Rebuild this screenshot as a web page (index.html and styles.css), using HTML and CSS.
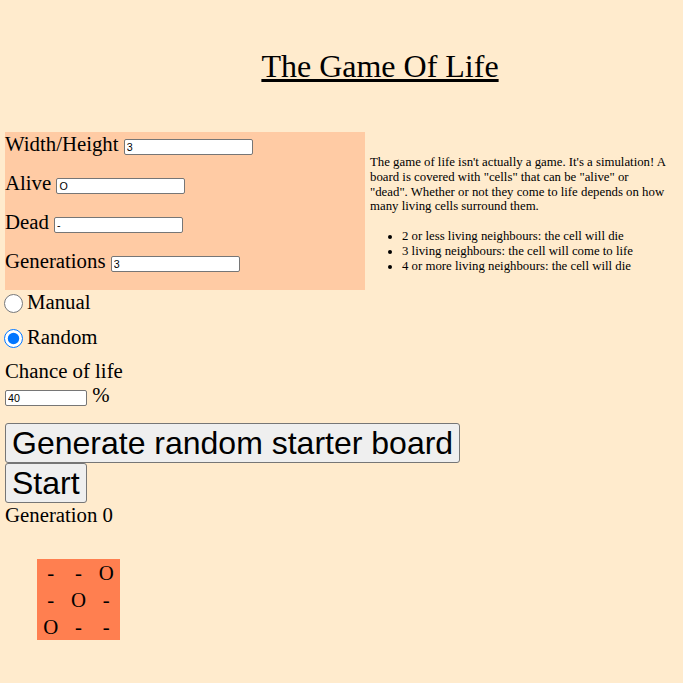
FILE: index.html
```html
<!DOCTYPE html>
<html lang="en">
<head>
<meta charset="utf-8">
<title>The Game Of Life</title>
<link rel="stylesheet" href="styles.css">
</head>
<body>
<header class="header">
  <h1 class="title">The Game Of Life</h1>
</header>

<section class="top">
  <div class="settings">
    <div class="field">Width/Height <input class="text-input" type="text" value="3"></div>
    <div class="field">Alive <input class="text-input" type="text" value="O"></div>
    <div class="field">Dead <input class="text-input" type="text" value="-"></div>
    <div class="field">Generations <input class="text-input" type="text" value="3"></div>
  </div>
  <div class="intro">
    <p class="intro-text">The game of life isn't actually a game. It's a simulation! A board is covered with "cells" that can be "alive" or "dead". Whether or not they come to life depends on how many living cells surround them.</p>
    <ul class="rules">
      <li>2 or less living neighbours: the cell will die</li>
      <li>3 living neighbours: the cell will come to life</li>
      <li>4 or more living neighbours: the cell will die</li>
    </ul>
  </div>
</section>

<div class="mode">
  <label class="radio-row"><input class="radio" type="radio" name="mode">Manual</label>
  <label class="radio-row"><input class="radio" type="radio" name="mode" checked>Random</label>
</div>

<div class="chance">
  <div class="chance-label">Chance of life</div>
  <div class="chance-input"><input class="text-input small" type="text" value="40"> %</div>
</div>

<div class="actions">
  <button class="btn" type="button">Generate random starter board</button>
  <button class="btn" type="button">Start</button>
</div>

<div class="generation">Generation 0</div>

<div class="board">
  <span class="cell">-</span><span class="cell">-</span><span class="cell">O</span>
  <span class="cell">-</span><span class="cell">O</span><span class="cell">-</span>
  <span class="cell">O</span><span class="cell">-</span><span class="cell">-</span>
</div>
</body>
</html>
```

FILE: styles.css
```css
html, body {
  margin: 0;
  padding: 0;
}

body {
  background: #ffebcd;
  font-family: "Liberation Serif", "Times New Roman", serif;
  color: #000;
  padding: 0 5px 20px 5px;
}

.header {
  padding-top: 48px;
  padding-left: 77px;
  text-align: center;
}

.title {
  margin: 0;
  font-size: 32px;
  line-height: 37px;
  font-weight: normal;
  text-decoration: underline;
}

.top {
  display: flex;
  align-items: center;
  margin-top: 47px;
}

.settings {
  width: 360px;
  flex: none;
  background: #ffcba4;
  padding: 0 0 17px 0;
  box-sizing: border-box;
}

.field {
  font-size: 20.8px;
  line-height: 24px;
  margin-bottom: 15px;
}

.field:last-child {
  margin-bottom: 0;
}

.text-input {
  box-sizing: border-box;
  width: 129px;
  height: 16px;
  padding: 1px 2px;
  border: 1px solid #767676;
  border-radius: 2px;
  background: #fff;
  font-family: "Liberation Sans", Arial, sans-serif;
  font-size: 10.7px;
  color: #000;
  margin: 0;
}

.text-input.small {
  width: 82px;
}

.intro {
  width: 297px;
  flex: none;
  margin-left: 5px;
  padding-top: 6.7px;
  font-size: 12.8px;
  line-height: 14.7px;
}

.intro-text {
  margin: 12.8px 0;
}

.rules {
  margin: 15.5px 0 12.8px 0;
  padding-left: 32px;
}

.mode {
  font-size: 20.8px;
}

.radio-row {
  display: block;
  line-height: 24px;
  height: 24px;
  margin-bottom: 11px;
}

.radio {
  width: 19px;
  height: 19px;
  margin: 0 4px 0 -1px;
  vertical-align: middle;
  position: relative;
  top: -1px;
}

.chance {
  font-size: 20.8px;
  line-height: 24px;
  margin-top: -1px;
}

.actions {
  display: flex;
  flex-direction: column;
  align-items: flex-start;
  margin-top: 15.5px;
}

.btn {
  height: 40px;
  margin: 0;
  padding: 0 6px;
  border: 1px solid #767676;
  border-radius: 3px;
  background: #efefef;
  font-family: "Liberation Sans", Arial, sans-serif;
  font-size: 32px;
  line-height: 38px;
  color: #000;
}

.generation {
  font-size: 20.8px;
  line-height: 24px;
}

.board {
  display: grid;
  grid-template-columns: repeat(3, 27.67px);
  grid-auto-rows: 27px;
  width: 83px;
  margin: 32px 0 0 32px;
  background: #ff7f50;
  font-size: 20.8px;
  line-height: 27px;
  text-align: center;
}
```
